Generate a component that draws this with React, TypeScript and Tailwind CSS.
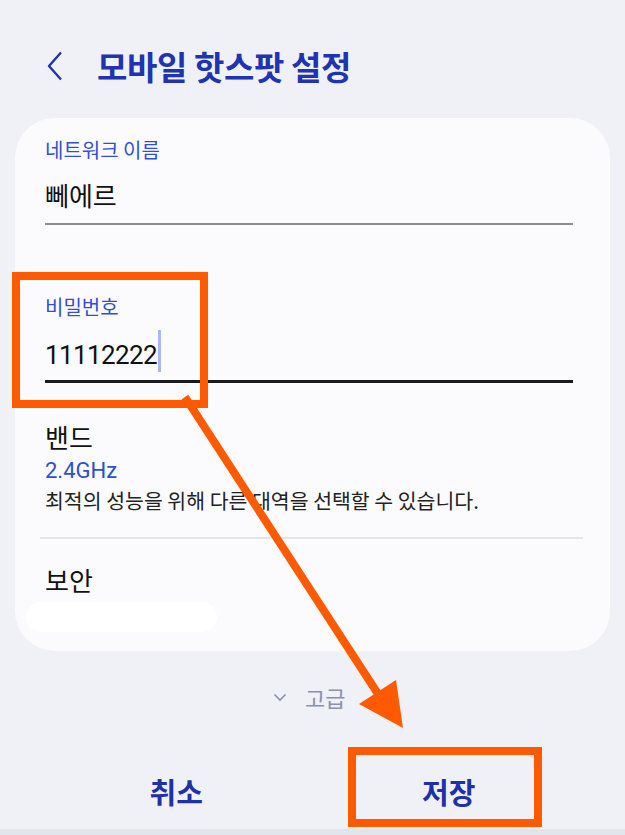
import React from "react";

const FONT = { fontFamily: '"Noto Sans CJK KR", "Noto Sans", sans-serif' };

function Field({
  label,
  value,
  focused,
}: {
  label: string;
  value: string;
  focused?: boolean;
}) {
  return (
    <div>
      <p className="text-[20px] leading-[26px] text-[#2f4fd6]">{label}</p>
      {focused ? (
        <div className="mt-[19px] flex h-[32px] items-center">
          <span className="text-[26px] leading-[32px] tracking-[-0.6px] text-[#111]" style={{ fontFamily: "Roboto, sans-serif" }}>
            {value}
          </span>
          <span className="-mt-[8px] ml-[1px] h-[42px] w-[3px] bg-[#a9b7f3]" />
        </div>
      ) : (
        <p className="mt-[15px] text-[26px] leading-[34px] text-[#111]">{value}</p>
      )}
      <div
        className={
          focused
            ? "mt-[9px] h-[3px] w-[528px] bg-[#1a1a1a]"
            : "mt-[11px] h-[2px] w-[528px] bg-[#8c8c8c]"
        }
      />
    </div>
  );
}

export default function App() {
  return (
    <div className="relative h-[835px] w-[625px] overflow-hidden bg-[#f0f1f6]" style={FONT}>
      {/* header */}
      <div className="flex h-[118px] items-center pt-[14px] pl-[46px]">
        <svg width="18" height="30" viewBox="0 0 18 30" fill="none">
          <path d="M15 1.5 L3 15 L15 28.5" stroke="#1e34b0" strokeWidth="2.4" strokeLinejoin="round" />
        </svg>
        <h1 className="ml-[33px] text-[33px] font-bold leading-[40px] tracking-[-0.4px] text-[#1e34b0]">
          모바일 핫스팟 설정
        </h1>
      </div>

      {/* card */}
      <div className="mx-[15px] h-[533px] w-[595px] rounded-[40px] bg-[#fbfbfd] px-[30px] pt-[19px]">
        <Field label="네트워크 이름" value="뻬에르" />
        <div className="mt-[69px]">
          <Field label="비밀번호" value="11112222" focused />
        </div>

        <p className="mt-[37px] text-[26px] leading-[34px] text-[#111]">밴드</p>
        <p className="mt-[4px] text-[22px] leading-[26px] text-[#2d4fd0]" style={{ fontFamily: "Roboto, sans-serif" }}>
          2.4GHz
        </p>
        <p className="mt-[3px] text-[20.5px] leading-[26px] text-[#222]">
          최적의 성능을 위해 다른 대역을 선택할 수 있습니다.
        </p>

        <div className="-ml-[5px] mt-[24px] h-[2px] w-[543px] bg-[#e4e5ea]" />

        <p className="mt-[24px] text-[26px] leading-[34px] text-[#111]">보안</p>
        <div className="-ml-[19px] mt-[5px] h-[30px] w-[191px] rounded-full bg-white" />
      </div>

      {/* advanced */}
      <div className="mt-[32px] flex h-[28px] items-center pl-[273px]">
        <svg width="14" height="9" viewBox="0 0 14 9" fill="none">
          <path d="M1.5 1.5 L7 7 L12.5 1.5" stroke="#8a90a8" strokeWidth="1.6" />
        </svg>
        <span className="ml-[18px] text-[22px] leading-[28px] text-[#8a90b0]">고급</span>
      </div>

      {/* buttons */}
      <div className="mt-[60px] grid grid-cols-2 px-[40px]">
        <button className="text-[29px] font-bold leading-[40px] text-[#1d32a8]">취소</button>
        <button className="text-[29px] font-bold leading-[40px] text-[#1d32a8]">저장</button>
      </div>

      <div className="absolute bottom-0 left-0 h-[6px] w-full bg-[#e3e5ec]" />

      {/* annotations */}
      <div className="absolute left-[12px] top-[272px] h-[136px] w-[196px] border-[8px] border-[#ff5a00]" />
      <div className="absolute left-[348px] top-[747px] h-[80px] w-[194px] border-[8px] border-[#ff5a00]" />
      <svg className="absolute left-0 top-0" width="625" height="835" viewBox="0 0 625 835">
        <line x1="185" y1="397" x2="380" y2="697" stroke="#ff5a00" strokeWidth="8" />
        <polygon points="359,704 396,680 403,728" fill="#ff5a00" />
      </svg>
    </div>
  );
}
